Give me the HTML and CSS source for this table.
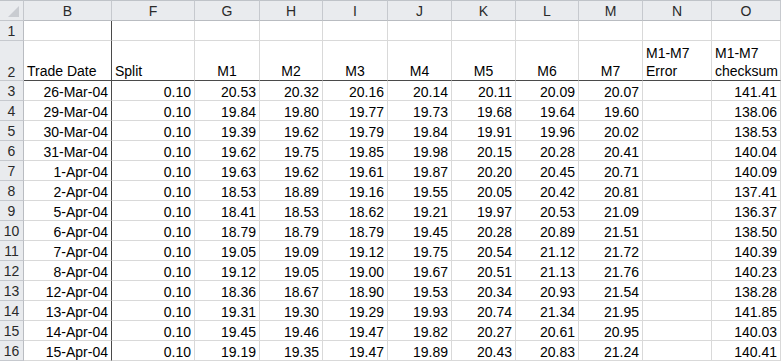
FILE: index.html
```html
<!DOCTYPE html>
<html>
<head>
<meta charset="utf-8">
<link rel="stylesheet" href="styles.css">
</head>
<body>
<div class="sheet">
  <div class="c corner"><span class="tri"></span></div>
  <div class="c ch">B</div><div class="c ch">F</div><div class="c ch">G</div><div class="c ch">H</div><div class="c ch">I</div><div class="c ch">J</div><div class="c ch">K</div><div class="c ch">L</div><div class="c ch">M</div><div class="c ch">N</div><div class="c ch">O</div>

  <div class="c rh">1</div>
  <div class="c sep"></div><div class="c"></div><div class="c"></div><div class="c"></div><div class="c"></div><div class="c"></div><div class="c"></div><div class="c"></div><div class="c"></div><div class="c"></div><div class="c"></div>

  <div class="c rh tall">2</div>
  <div class="c sep h2">Trade Date</div><div class="c h2">Split</div><div class="c h2 ctr">M1</div><div class="c h2 ctr">M2</div><div class="c h2 ctr">M3</div><div class="c h2 ctr">M4</div><div class="c h2 ctr">M5</div><div class="c h2 ctr">M6</div><div class="c h2 ctr">M7</div><div class="c h2">M1-M7<br>Error</div><div class="c h2">M1-M7<br>checksum</div>

  <div class="c rh">3</div>
  <div class="c sep r">26-Mar-04</div><div class="c r">0.10</div><div class="c r">20.53</div><div class="c r">20.32</div><div class="c r">20.16</div><div class="c r">20.14</div><div class="c r">20.11</div><div class="c r">20.09</div><div class="c r">20.07</div><div class="c"></div><div class="c r">141.41</div>

  <div class="c rh">4</div>
  <div class="c sep r">29-Mar-04</div><div class="c r">0.10</div><div class="c r">19.84</div><div class="c r">19.80</div><div class="c r">19.77</div><div class="c r">19.73</div><div class="c r">19.68</div><div class="c r">19.64</div><div class="c r">19.60</div><div class="c"></div><div class="c r">138.06</div>

  <div class="c rh">5</div>
  <div class="c sep r">30-Mar-04</div><div class="c r">0.10</div><div class="c r">19.39</div><div class="c r">19.62</div><div class="c r">19.79</div><div class="c r">19.84</div><div class="c r">19.91</div><div class="c r">19.96</div><div class="c r">20.02</div><div class="c"></div><div class="c r">138.53</div>

  <div class="c rh">6</div>
  <div class="c sep r">31-Mar-04</div><div class="c r">0.10</div><div class="c r">19.62</div><div class="c r">19.75</div><div class="c r">19.85</div><div class="c r">19.98</div><div class="c r">20.15</div><div class="c r">20.28</div><div class="c r">20.41</div><div class="c"></div><div class="c r">140.04</div>

  <div class="c rh">7</div>
  <div class="c sep r">1-Apr-04</div><div class="c r">0.10</div><div class="c r">19.63</div><div class="c r">19.62</div><div class="c r">19.61</div><div class="c r">19.87</div><div class="c r">20.20</div><div class="c r">20.45</div><div class="c r">20.71</div><div class="c"></div><div class="c r">140.09</div>

  <div class="c rh">8</div>
  <div class="c sep r">2-Apr-04</div><div class="c r">0.10</div><div class="c r">18.53</div><div class="c r">18.89</div><div class="c r">19.16</div><div class="c r">19.55</div><div class="c r">20.05</div><div class="c r">20.42</div><div class="c r">20.81</div><div class="c"></div><div class="c r">137.41</div>

  <div class="c rh">9</div>
  <div class="c sep r">5-Apr-04</div><div class="c r">0.10</div><div class="c r">18.41</div><div class="c r">18.53</div><div class="c r">18.62</div><div class="c r">19.21</div><div class="c r">19.97</div><div class="c r">20.53</div><div class="c r">21.09</div><div class="c"></div><div class="c r">136.37</div>

  <div class="c rh">10</div>
  <div class="c sep r">6-Apr-04</div><div class="c r">0.10</div><div class="c r">18.79</div><div class="c r">18.79</div><div class="c r">18.79</div><div class="c r">19.45</div><div class="c r">20.28</div><div class="c r">20.89</div><div class="c r">21.51</div><div class="c"></div><div class="c r">138.50</div>

  <div class="c rh">11</div>
  <div class="c sep r">7-Apr-04</div><div class="c r">0.10</div><div class="c r">19.05</div><div class="c r">19.09</div><div class="c r">19.12</div><div class="c r">19.75</div><div class="c r">20.54</div><div class="c r">21.12</div><div class="c r">21.72</div><div class="c"></div><div class="c r">140.39</div>

  <div class="c rh">12</div>
  <div class="c sep r">8-Apr-04</div><div class="c r">0.10</div><div class="c r">19.12</div><div class="c r">19.05</div><div class="c r">19.00</div><div class="c r">19.67</div><div class="c r">20.51</div><div class="c r">21.13</div><div class="c r">21.76</div><div class="c"></div><div class="c r">140.23</div>

  <div class="c rh">13</div>
  <div class="c sep r">12-Apr-04</div><div class="c r">0.10</div><div class="c r">18.36</div><div class="c r">18.67</div><div class="c r">18.90</div><div class="c r">19.53</div><div class="c r">20.34</div><div class="c r">20.93</div><div class="c r">21.54</div><div class="c"></div><div class="c r">138.28</div>

  <div class="c rh">14</div>
  <div class="c sep r">13-Apr-04</div><div class="c r">0.10</div><div class="c r">19.31</div><div class="c r">19.30</div><div class="c r">19.29</div><div class="c r">19.93</div><div class="c r">20.74</div><div class="c r">21.34</div><div class="c r">21.95</div><div class="c"></div><div class="c r">141.85</div>

  <div class="c rh">15</div>
  <div class="c sep r">14-Apr-04</div><div class="c r">0.10</div><div class="c r">19.45</div><div class="c r">19.46</div><div class="c r">19.47</div><div class="c r">19.82</div><div class="c r">20.27</div><div class="c r">20.61</div><div class="c r">20.95</div><div class="c"></div><div class="c r">140.03</div>

  <div class="c rh">16</div>
  <div class="c sep r">15-Apr-04</div><div class="c r">0.10</div><div class="c r">19.19</div><div class="c r">19.35</div><div class="c r">19.47</div><div class="c r">19.89</div><div class="c r">20.43</div><div class="c r">20.83</div><div class="c r">21.24</div><div class="c"></div><div class="c r">140.41</div>
</div>
</body>
</html>
```

FILE: styles.css
```css
html, body {
  margin: 0;
  padding: 0;
  background: #ffffff;
}

.sheet {
  display: grid;
  grid-template-columns: 24px 88px 83px 65px 63px 65px 64px 64px 63px 64px 69px 69px;
  grid-template-rows: 21px 20px 40px repeat(14, 20px);
  font-family: "Liberation Sans", Arial, sans-serif;
  font-size: 14px;
  color: #000000;
  width: 781px;
}

.c {
  box-sizing: border-box;
  border-right: 1px solid #d9d9d9;
  border-bottom: 1px solid #d9d9d9;
  display: flex;
  align-items: flex-end;
  padding: 0 3px 0 3px;
  line-height: 16px;
  white-space: nowrap;
  overflow: hidden;
}

.r {
  justify-content: flex-end;
}

.ctr {
  justify-content: center;
}

.corner {
  position: relative;
  background: #e9ebee;
  border-color: #c4c7cc;
  border-top: 1px solid #bfc3c8;
}

.tri {
  position: absolute;
  right: 4px;
  bottom: 3px;
  width: 0;
  height: 0;
  border-left: 11px solid transparent;
  border-bottom: 11px solid #c9ccd1;
}

.ch {
  background: #e9ebee;
  border-top: 1px solid #bfc3c8;
  border-right-color: #c6c9ce;
  border-bottom-color: #b9bcc1;
  justify-content: center;
  align-items: center;
  padding: 0;
  color: #2a2a2a;
}

.rh {
  background: #e9ebee;
  border-right-color: #b9bcc1;
  border-bottom-color: #c6c9ce;
  justify-content: center;
  align-items: center;
  padding: 0;
  color: #2a2a2a;
}

.rh.tall {
  align-items: flex-end;
}

.sep {
  border-right-color: #4a4a4a;
}

.h2 {
  border-bottom-color: #4a4a4a;
  white-space: normal;
  line-height: 18px;
}
```
